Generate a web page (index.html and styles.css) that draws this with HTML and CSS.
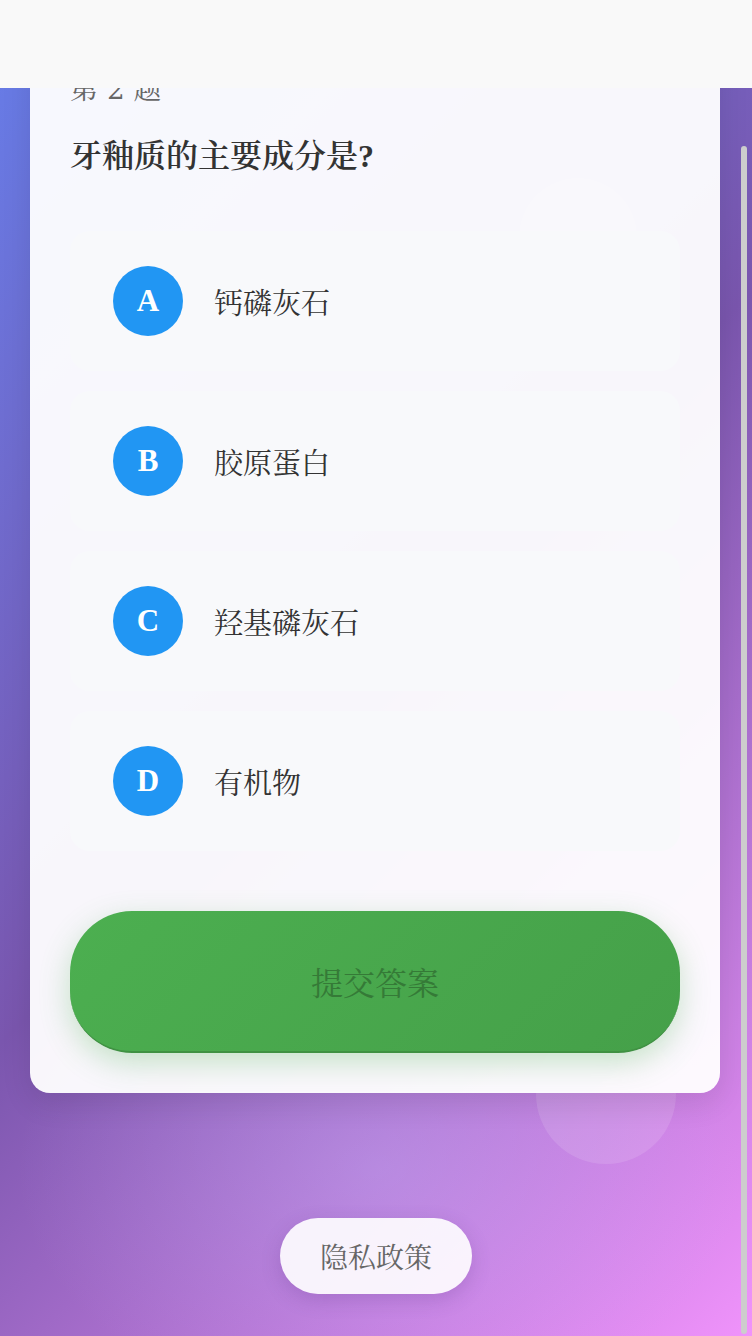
FILE: index.html
```html
<!DOCTYPE html>
<html lang="zh-CN">
<head>
    <meta charset="UTF-8">
    <meta name="viewport" content="width=device-width, initial-scale=1.0">
    <title>答题</title>
    <link rel="stylesheet" href="styles.css">
</head>
<body>
    <div class="top-bar"></div>

    <div class="bubble bubble-card"></div>
    <div class="bubble bubble-bottom"></div>

    <main class="page">
        <section class="quiz-card">
            <div class="quiz-index">第 2 题</div>
            <h2 class="quiz-question">牙釉质的主要成分是?</h2>

            <div class="options">
                <div class="option">
                    <span class="option-letter">A</span>
                    <span class="option-text">钙磷灰石</span>
                </div>
                <div class="option">
                    <span class="option-letter">B</span>
                    <span class="option-text">胶原蛋白</span>
                </div>
                <div class="option">
                    <span class="option-letter">C</span>
                    <span class="option-text">羟基磷灰石</span>
                </div>
                <div class="option">
                    <span class="option-letter">D</span>
                    <span class="option-text">有机物</span>
                </div>
            </div>

            <button class="submit-btn">提交答案</button>
        </section>

        <div class="footer">
            <button class="privacy-btn">隐私政策</button>
        </div>
    </main>

    <div class="scroll-thumb"></div>
</body>
</html>
```

FILE: styles.css
```css
html, body {
    margin: 0;
    padding: 0;
}
body {
    font-family: "Liberation Serif", "Noto Serif CJK SC", "Noto Sans CJK SC", serif;
    min-height: 1336px;
    background:
        radial-gradient(ellipse 520px 360px at 380px 1170px, rgba(195, 190, 255, 0.3), rgba(195, 190, 255, 0) 70%),
        linear-gradient(135deg, #667eea 0%, #7a56ae 50%, #f093fb 100%);
    position: relative;
    overflow: hidden;
}
.top-bar {
    position: fixed;
    top: 0;
    left: 0;
    right: 0;
    height: 88px;
    background-color: #f9f9f9;
    z-index: 10;
}
.bubble {
    position: absolute;
    border-radius: 50%;
    background-color: rgba(255, 255, 255, 0.12);
}
.bubble-card {
    width: 118px;
    height: 118px;
    left: 519px;
    top: 178px;
}
.bubble-bottom {
    width: 140px;
    height: 140px;
    left: 536px;
    top: 1024px;
}
.page {
    position: relative;
    padding: 30px 32px 0 30px;
}
.quiz-card {
    background-color: rgba(255, 255, 255, 0.95);
    border-radius: 20px;
    padding: 40px;
    box-shadow: 0 10px 30px rgba(0, 0, 0, 0.1);
}
.quiz-index {
    font-family: "DejaVu Serif", "Noto Serif CJK SC", serif;
    font-size: 28px;
    line-height: 39px;
    color: #666;
}
.quiz-question {
    margin: 25px 0 52px;
    font-size: 32px;
    line-height: 45px;
    font-weight: 600;
    color: #333;
}
.options {
    display: flex;
    flex-direction: column;
    gap: 20px;
}
.option {
    display: flex;
    align-items: center;
    gap: 31px;
    height: 140px;
    box-sizing: border-box;
    padding: 0 43px;
    background-color: #f8f9fb;
    border-radius: 20px;
}
.option-letter {
    width: 70px;
    height: 70px;
    border-radius: 50%;
    background-color: #2196f3;
    color: #fff;
    font-size: 31px;
    font-weight: bold;
    display: flex;
    align-items: center;
    justify-content: center;
}
.option-text {
    font-size: 29px;
    color: #333;
}
.submit-btn {
    display: block;
    width: 100%;
    height: 142px;
    margin-top: 60px;
    border: none;
    border-bottom: 2px solid #3f9142;
    border-radius: 62px;
    background: linear-gradient(135deg, #4caf50, #45a049);
    box-shadow: 0 10px 30px rgba(76, 175, 80, 0.3);
    font-family: inherit;
    font-size: 32px;
    color: #357a37;
}
.footer {
    display: flex;
    justify-content: center;
    padding: 125px 0 0 2px;
}
.privacy-btn {
    height: 76px;
    padding: 0 40px;
    border: none;
    border-radius: 38px;
    background-color: rgba(255, 255, 255, 0.9);
    box-shadow: 0 6px 20px rgba(80, 40, 120, 0.2);
    font-family: inherit;
    font-size: 28px;
    color: #666;
}
.scroll-thumb {
    position: fixed;
    top: 146px;
    right: 5px;
    width: 6px;
    height: 1188px;
    border-radius: 3px;
    background-color: #cdcdcd;
    z-index: 11;
}
```
